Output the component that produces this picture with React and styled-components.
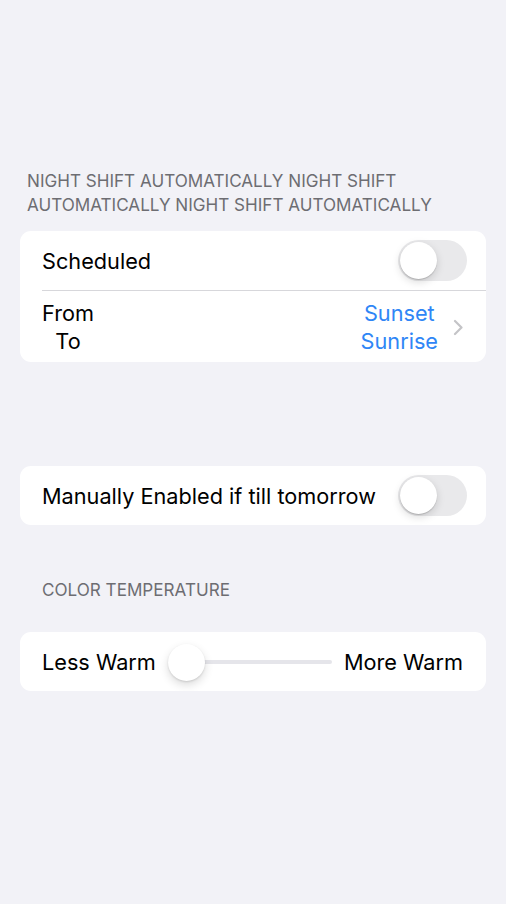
import { createGlobalStyle } from "styled-components";
import styled from "styled-components";

const GlobalStyle = createGlobalStyle`
  html, body {
    margin: 0;
    padding: 0;
    background: #f2f2f7;
  }
  body {
    font-family: Inter, "Liberation Sans", Arial, sans-serif;
    -webkit-font-smoothing: antialiased;
  }
`;

const Page = styled.div`
  width: 506px;
  height: 904px;
  box-sizing: border-box;
  padding: 169px 20px 0;
  background: #f2f2f7;
  display: flex;
  flex-direction: column;
`;

const SectionHeader = styled.div`
  color: #6d6d72;
  font-size: 17.1px;
  line-height: 24px;
  text-transform: uppercase;
  padding-left: ${(p) => p.$left}px;
  margin-top: ${(p) => p.$top || 0}px;
  margin-bottom: ${(p) => p.$bottom || 0}px;
`;

const Card = styled.div`
  background: #ffffff;
  border-radius: 11px;
  margin-top: ${(p) => p.$top || 0}px;
  overflow: hidden;
`;

const Row = styled.div`
  display: flex;
  align-items: center;
  justify-content: space-between;
  height: ${(p) => p.$height}px;
  padding: 1px 19px 0 22px;
  box-sizing: border-box;
`;

const Separator = styled.div`
  height: 1px;
  background: #d7d7db;
  margin-left: 22px;
`;

const Label = styled.span`
  font-size: 21.7px;
  color: #000;
  white-space: nowrap;
`;

const Stack = styled.div`
  display: flex;
  flex-direction: column;
  align-items: center;
  font-size: 21.7px;
  line-height: 28px;
  color: ${(p) => p.$color || "#000"};
`;

const Trailing = styled.div`
  display: flex;
  align-items: center;
  gap: 15px;
  margin-right: 4px;
`;

const Toggle = styled.div`
  position: relative;
  width: 69px;
  height: 41px;
  border-radius: 21px;
  background: #e9e9eb;
  flex-shrink: 0;
  margin-top: -1px;

  &::after {
    content: "";
    position: absolute;
    top: 2px;
    left: 2px;
    width: 37px;
    height: 37px;
    border-radius: 50%;
    background: #fff;
    box-shadow: 0 3px 8px rgba(0, 0, 0, 0.15), 0 1px 1px rgba(0, 0, 0, 0.16);
  }
`;

const SliderRow = styled(Row)`
  gap: 12px;
  padding-right: 23px;
`;

const Track = styled.div`
  position: relative;
  flex: 1;
  height: 4px;
  border-radius: 2px;
  background: #e5e5ea;
`;

const Thumb = styled.div`
  position: absolute;
  left: 0;
  top: 50%;
  width: 37px;
  height: 37px;
  margin-top: -18.5px;
  border-radius: 50%;
  background: #fff;
  box-shadow: 0 4px 10px rgba(0, 0, 0, 0.14), 0 1px 2px rgba(0, 0, 0, 0.12);
`;

function Chevron() {
  return (
    <svg width="10" height="17" viewBox="0 0 10 17" fill="none">
      <path
        d="M2 2l6.5 6.5L2 15"
        stroke="#c4c4c7"
        strokeWidth="2.2"
        strokeLinecap="round"
        strokeLinejoin="round"
      />
    </svg>
  );
}

function App() {
  return (
    <>
      <GlobalStyle />
      <Page>
        <SectionHeader $left={7} $bottom={14}>
          Night Shift automatically Night Shift automatically Night Shift
          automatically
        </SectionHeader>
        <Card>
          <Row $height={59}>
            <Label>Scheduled</Label>
            <Toggle />
          </Row>
          <Separator />
          <Row $height={71}>
            <Stack>
              <span>From</span>
              <span>To</span>
            </Stack>
            <Trailing>
              <Stack $color="#2f86f6">
                <span>Sunset</span>
                <span>Sunrise</span>
              </Stack>
              <Chevron />
            </Trailing>
          </Row>
        </Card>

        <Card $top={104}>
          <Row $height={59}>
            <Label>Manually Enabled if till tomorrow</Label>
            <Toggle />
          </Row>
        </Card>

        <SectionHeader $left={22} $top={53}>
          Color Temperature
        </SectionHeader>

        <Card $top={30}>
          <SliderRow $height={59}>
            <Label>Less Warm</Label>
            <Track>
              <Thumb />
            </Track>
            <Label>More Warm</Label>
          </SliderRow>
        </Card>
      </Page>
    </>
  );
}

export default App;
